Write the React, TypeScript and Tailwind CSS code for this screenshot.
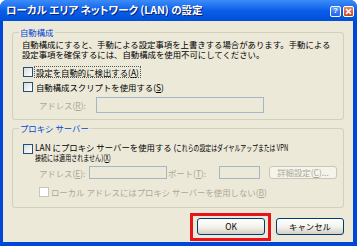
import React from "react";

const jp = "font-['MS_UI_Gothic','Noto_Sans_CJK_JP',sans-serif]";

function Check({ disabled = false }: { disabled?: boolean }) {
  return (
    <div
      className={
        "w-[10px] h-[10px] shrink-0 border " +
        (disabled
          ? "border-[#C8C6B9] bg-white"
          : "border-[#1C5180] bg-gradient-to-br from-[#DCDCD7] to-white")
      }
    />
  );
}

function XpButton({ children, disabled = false, w, h }: { children: React.ReactNode; disabled?: boolean; w: string; h: string }) {
  return (
    <div
      className={
        w +
        " " +
        h +
        " rounded-[3px] border flex items-center justify-center text-[8.4px] leading-none whitespace-nowrap " +
        (disabled
          ? "border-[#C9C7BA] bg-[#F5F4EA] text-[#ACA899]"
          : "border-[#003C74] bg-gradient-to-b from-white via-[#F4F3EE] to-[#D6D0C5] text-black")
      }
    >
      {children}
    </div>
  );
}

export default function App() {
  return (
    <div className={"w-[357px] h-[246px] flex flex-col bg-[#0046D8] rounded-t-[7px] overflow-hidden " + jp}>
      {/* title bar */}
      <div className="h-[21px] shrink-0 flex items-center pl-[6px] pr-[3px] bg-gradient-to-b from-[#3C8CF8] via-[#0A5EE9] to-[#0050D8]">
        <div className="text-white font-bold text-[10.5px] leading-none [font-feature-settings:'palt'] [text-shadow:1px_1px_0_#0A1E6E] flex-1 whitespace-nowrap">
          ローカル エリア ネットワーク (LAN) の設定
        </div>
        <div className="flex gap-[2px] mt-[1px]">
          <div className="w-[11px] h-[11px] rounded-[2px] border border-white bg-gradient-to-b from-[#5A9CFF] to-[#2462E0] flex items-center justify-center text-white text-[8px] font-bold leading-none font-['Liberation_Sans',sans-serif]">
            ?
          </div>
          <div className="w-[11px] h-[11px] rounded-[2px] border border-white bg-gradient-to-b from-[#E8866C] to-[#C9421A] flex items-center justify-center">
            <svg width="7" height="7" viewBox="0 0 7 7">
              <path d="M1 1L6 6M6 1L1 6" stroke="white" strokeWidth="1.6" />
            </svg>
          </div>
        </div>
      </div>
      {/* body */}
      <div className="flex-1 ml-[3px] mr-[4px] mb-[4px] bg-[#ECE9D8] flex flex-col text-black text-[8.4px] leading-[10px]">
        {/* group 1 */}
        <div className="relative ml-[9px] mt-[11px] w-[332px] h-[88px] border border-[#D0D0BF] rounded-[3px] pl-[9px] pt-[6px]">
          <div className="absolute left-[6px] -top-[6px] px-[1px] bg-[#ECE9D8] text-[#0046D5]">
            自動構成
          </div>
          <div className="whitespace-nowrap">自動構成にすると、手動による設定事項を上書きする場合があります。手動による</div>
          <div className="whitespace-nowrap">設定事項を確保するには、自動構成を使用不可にしてください。</div>
          <div className="flex items-center mt-[8px] ml-[1px]">
            <Check />
            <span className="ml-[2px] outline-1 outline-dotted outline-[#555] px-[1px] whitespace-nowrap">
              設定を自動的に検出する(<span className="underline">A</span>)
            </span>
          </div>
          <div className="flex items-center mt-[5px] ml-[1px]">
            <Check />
            <span className="ml-[3px] whitespace-nowrap">
              自動構成スクリプトを使用する(<span className="underline">S</span>)
            </span>
          </div>
          <div className="flex items-center mt-[5px] ml-[17px]">
            <span className="text-[#ACA899] w-[57px] whitespace-nowrap">
              アドレス(<span className="underline">R</span>):
            </span>
            <div className="w-[168px] h-[16px] border border-[#A5B6C7] bg-[#ECE9D8]" />
          </div>
        </div>
        {/* group 2 */}
        <div className="relative ml-[9px] mt-[8px] w-[332px] h-[80px] border border-[#D0D0BF] rounded-[3px] pl-[10px] pt-[15px]">
          <div className="absolute left-[6px] -top-[6px] px-[1px] bg-[#ECE9D8] text-[#0046D5] whitespace-nowrap">
            プロキシ サーバー
          </div>
          <div className="flex items-start">
            <Check />
            <div className="ml-[2px] -mt-[2px]">
              <div className="whitespace-nowrap">
                LAN にプロキシ サーバーを使用する (
                <span className="inline-block scale-x-[0.7] origin-left">これらの設定はダイヤルアップまたは VPN</span>
              </div>
              <div className="whitespace-nowrap">
                <span className="inline-block scale-x-[0.72] origin-left">
                  接続には適用されません)(<span className="underline">X</span>)
                </span>
              </div>
            </div>
          </div>
          <div className="flex items-center mt-[4px] ml-[16px] text-[#ACA899]">
            <span className="w-[50px] whitespace-nowrap">
              アドレス(<span className="underline">E</span>):
            </span>
            <div className="w-[78px] h-[13px] border border-[#A5B6C7] bg-[#ECE9D8]" />
            <span className="ml-[1px] w-[51px] whitespace-nowrap">
              ポート(<span className="underline">T</span>):
            </span>
            <div className="w-[41px] h-[13px] border border-[#A5B6C7] bg-[#ECE9D8]" />
            <div className="ml-[9px]">
              <XpButton w="w-[68px]" h="h-[13px]" disabled>
                詳細設定(<span className="underline">C</span>)...
              </XpButton>
            </div>
          </div>
          <div className="flex items-center mt-[8px] ml-[16px] text-[#ACA899]">
            <Check disabled />
            <span className="ml-[2px] whitespace-nowrap">
              ローカル アドレスにはプロキシ サーバーを使用しない(<span className="underline">B</span>)
            </span>
          </div>
        </div>
        {/* buttons */}
        <div className="flex items-start mt-[5px] ml-[187px]">
          <div className="border-[3px] border-[#E8141B] pl-[4px] pr-[3px] pt-[2px] pb-[3px]">
            <XpButton w="w-[68px]" h="h-[17px]">OK</XpButton>
          </div>
          <div className="ml-[5px] mt-[5px]">
            <XpButton w="w-[68px]" h="h-[17px]">キャンセル</XpButton>
          </div>
        </div>
      </div>
    </div>
  );
}
